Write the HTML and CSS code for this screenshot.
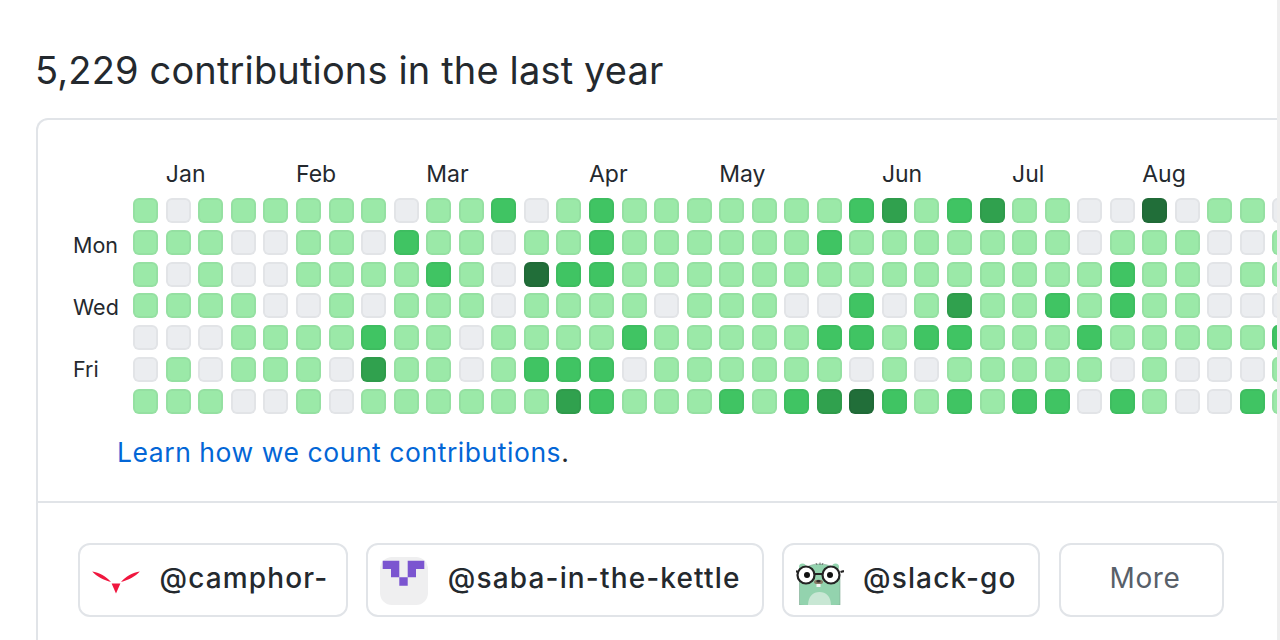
FILE: index.html
```html
<!DOCTYPE html>
<html lang="en">
<head>
<meta charset="utf-8">
<title>Contributions</title>
<link rel="stylesheet" href="styles.css">
</head>
<body>
<main class="page">
<h2 class="title">5,229 contributions in the last year</h2>
<section class="card">
<div class="graph">
<div class="months"><span class="m1">Jan</span><span class="m2">Feb</span><span class="m3">Mar</span><span class="m4">Apr</span><span class="m5">May</span><span class="m6">Jun</span><span class="m7">Jul</span><span class="m8">Aug</span></div>
<div class="calendar">
<div class="weekdays"><span class="d1">Mon</span><span class="d3">Wed</span><span class="d5">Fri</span></div>
<div class="cells">
<i class="l1"></i><i class="l1"></i><i class="l1"></i><i class="l1"></i><i class="l0"></i><i class="l0"></i><i class="l1"></i>
<i class="l0"></i><i class="l1"></i><i class="l0"></i><i class="l1"></i><i class="l0"></i><i class="l1"></i><i class="l1"></i>
<i class="l1"></i><i class="l1"></i><i class="l1"></i><i class="l1"></i><i class="l0"></i><i class="l0"></i><i class="l1"></i>
<i class="l1"></i><i class="l0"></i><i class="l0"></i><i class="l1"></i><i class="l1"></i><i class="l1"></i><i class="l0"></i>
<i class="l1"></i><i class="l0"></i><i class="l0"></i><i class="l0"></i><i class="l1"></i><i class="l1"></i><i class="l0"></i>
<i class="l1"></i><i class="l1"></i><i class="l1"></i><i class="l0"></i><i class="l1"></i><i class="l1"></i><i class="l1"></i>
<i class="l1"></i><i class="l1"></i><i class="l1"></i><i class="l1"></i><i class="l1"></i><i class="l0"></i><i class="l0"></i>
<i class="l1"></i><i class="l0"></i><i class="l1"></i><i class="l0"></i><i class="l2"></i><i class="l3"></i><i class="l1"></i>
<i class="l0"></i><i class="l2"></i><i class="l1"></i><i class="l1"></i><i class="l1"></i><i class="l1"></i><i class="l1"></i>
<i class="l1"></i><i class="l1"></i><i class="l2"></i><i class="l1"></i><i class="l1"></i><i class="l1"></i><i class="l1"></i>
<i class="l1"></i><i class="l1"></i><i class="l1"></i><i class="l1"></i><i class="l0"></i><i class="l0"></i><i class="l1"></i>
<i class="l2"></i><i class="l0"></i><i class="l0"></i><i class="l0"></i><i class="l1"></i><i class="l1"></i><i class="l1"></i>
<i class="l0"></i><i class="l1"></i><i class="l4"></i><i class="l1"></i><i class="l1"></i><i class="l2"></i><i class="l1"></i>
<i class="l1"></i><i class="l1"></i><i class="l2"></i><i class="l1"></i><i class="l1"></i><i class="l2"></i><i class="l3"></i>
<i class="l2"></i><i class="l2"></i><i class="l2"></i><i class="l1"></i><i class="l1"></i><i class="l2"></i><i class="l2"></i>
<i class="l1"></i><i class="l1"></i><i class="l1"></i><i class="l1"></i><i class="l2"></i><i class="l0"></i><i class="l1"></i>
<i class="l1"></i><i class="l1"></i><i class="l1"></i><i class="l0"></i><i class="l1"></i><i class="l1"></i><i class="l1"></i>
<i class="l1"></i><i class="l1"></i><i class="l1"></i><i class="l1"></i><i class="l1"></i><i class="l1"></i><i class="l1"></i>
<i class="l1"></i><i class="l1"></i><i class="l1"></i><i class="l1"></i><i class="l1"></i><i class="l1"></i><i class="l2"></i>
<i class="l1"></i><i class="l1"></i><i class="l1"></i><i class="l1"></i><i class="l1"></i><i class="l1"></i><i class="l1"></i>
<i class="l1"></i><i class="l1"></i><i class="l1"></i><i class="l0"></i><i class="l1"></i><i class="l1"></i><i class="l2"></i>
<i class="l1"></i><i class="l2"></i><i class="l1"></i><i class="l0"></i><i class="l2"></i><i class="l1"></i><i class="l3"></i>
<i class="l2"></i><i class="l1"></i><i class="l1"></i><i class="l2"></i><i class="l2"></i><i class="l0"></i><i class="l4"></i>
<i class="l3"></i><i class="l1"></i><i class="l1"></i><i class="l0"></i><i class="l1"></i><i class="l1"></i><i class="l2"></i>
<i class="l1"></i><i class="l1"></i><i class="l1"></i><i class="l1"></i><i class="l2"></i><i class="l0"></i><i class="l1"></i>
<i class="l2"></i><i class="l1"></i><i class="l1"></i><i class="l3"></i><i class="l2"></i><i class="l1"></i><i class="l2"></i>
<i class="l3"></i><i class="l1"></i><i class="l1"></i><i class="l1"></i><i class="l1"></i><i class="l1"></i><i class="l1"></i>
<i class="l1"></i><i class="l1"></i><i class="l1"></i><i class="l1"></i><i class="l1"></i><i class="l1"></i><i class="l2"></i>
<i class="l1"></i><i class="l1"></i><i class="l1"></i><i class="l2"></i><i class="l1"></i><i class="l1"></i><i class="l2"></i>
<i class="l0"></i><i class="l0"></i><i class="l1"></i><i class="l1"></i><i class="l2"></i><i class="l1"></i><i class="l0"></i>
<i class="l0"></i><i class="l1"></i><i class="l2"></i><i class="l2"></i><i class="l1"></i><i class="l0"></i><i class="l2"></i>
<i class="l4"></i><i class="l1"></i><i class="l1"></i><i class="l1"></i><i class="l1"></i><i class="l1"></i><i class="l1"></i>
<i class="l0"></i><i class="l1"></i><i class="l1"></i><i class="l1"></i><i class="l1"></i><i class="l0"></i><i class="l0"></i>
<i class="l1"></i><i class="l0"></i><i class="l0"></i><i class="l0"></i><i class="l1"></i><i class="l0"></i><i class="l0"></i>
<i class="l1"></i><i class="l0"></i><i class="l1"></i><i class="l0"></i><i class="l1"></i><i class="l0"></i><i class="l2"></i>
<i class="l0"></i><i class="l1"></i><i class="l1"></i><i class="l0"></i><i class="l2"></i><i class="l1"></i><i class="l1"></i>
</div>
</div>
<p class="learn"><a href="#">Learn how we count contributions</a>.</p>
</div>
<div class="orgs">
<a class="chip chip-short" href="#">
<svg class="avatar" viewBox="0 0 48 48" aria-hidden="true"><path fill="#f0163e" d="M.2 14.600C7 15.300 14.500 20 19 25c-7-1.500-14.500-5.400-18.800-10.400zM47.800 14.600C41 15.300 33.500 20 29 25c7-1.500 14.500-5.400 18.800-10.400zM19.600 26.400h8.800L24 36.500z"/></svg>
<span>@camphor-</span>
</a>
<a class="chip" href="#">
<svg class="avatar" viewBox="0 0 48 48" aria-hidden="true"><rect width="48" height="48" rx="12" fill="#efeff0"/><path fill="#7b55d0" d="M2.700 3.700h16.600v16.600h8.400V3.700h16.600V12H36v8.300h-8.300v8.400h-8.400v-8.400H11V12H2.700z"/></svg>
<span>@saba-in-the-kettle</span>
</a>
<a class="chip" href="#">
<svg class="avatar" viewBox="0 0 48 48" aria-hidden="true">
<circle cx="6.500" cy="10" r="3.500" fill="#93d3ae"/><circle cx="39.500" cy="10" r="3.500" fill="#93d3ae"/>
<path fill="#93d3ae" stroke="#7ea892" stroke-width=".6" d="M3.500 48V22C3.500 12 13 7 23.500 7S44 12 44 22v26c-8 1.300-32.500 1.300-40.500 0z"/>
<path fill="#c8e7d4" d="M12 48.500c0-9 5-13.500 11.500-13.500S35 39.500 35 48.500c-6 .8-17 .8-23 0z"/>
<path fill="none" stroke="#555" stroke-width=".8" d="M20 6l1 2M24 5.500V8M27 6l-1 2"/>
<path fill="none" stroke="#232323" stroke-width="2.200" d="M-1 14l3.500 1M48 14l-3.500 1M18 17h9"/>
<circle cx="10" cy="18" r="8.500" fill="#fff" stroke="#232323" stroke-width="2.200"/>
<circle cx="35" cy="18" r="8.500" fill="#fff" stroke="#232323" stroke-width="2.200"/>
<circle cx="11" cy="18" r="3" fill="#111"/><circle cx="34" cy="18" r="3" fill="#111"/>
<ellipse cx="22.500" cy="25" rx="4.500" ry="2.200" fill="#8a7a66"/><ellipse cx="22.500" cy="24.300" rx="2.200" ry="1.300" fill="#2b2b2b"/>
<rect x="20.500" y="27" width="4" height="3" fill="#f5f5f5"/>
</svg>
<span>@slack-go</span>
</a>
<a class="chip more" href="#"><span>More</span></a>
</div>
</section>
</main>
<div class="edge"></div>
</body>
</html>
```
FILE: styles.css
```css
* { box-sizing: border-box; }
html, body { margin: 0; height: 640px; overflow: hidden; background: #fff; }
body {
  display: flex;
  font-family: Inter, "Liberation Sans", sans-serif;
  color: #24292e;
}
.page { flex: 1; min-width: 0; overflow: hidden; padding: 46px 0 0 36px; }
.edge { width: 3px; background: #eeeeee; }
.title { margin: 0 0 24px -1px; font-size: 38px; line-height: 48px; font-weight: 400; letter-spacing: .15px; }
.card { margin-right: -30px; border: 2px solid #e1e4e8; border-bottom: 0; border-radius: 12px 12px 0 0; }
.graph { padding: 38px 0 34px 36px; border-bottom: 2px solid #e1e4e8; }
.months {
  display: grid;
  grid-template-columns: repeat(36, 25px);
  column-gap: 7.56px;
  height: 30px;
  margin: 0 0 10px 59.3px;
  font-size: 23px;
  line-height: 32px;
}
.months span { white-space: nowrap; }
.m1 { grid-column: 2; }
.m2 { grid-column: 6; }
.m3 { grid-column: 10; }
.m4 { grid-column: 15; }
.m5 { grid-column: 19; }
.m6 { grid-column: 24; }
.m7 { grid-column: 28; }
.m8 { grid-column: 32; }
.calendar { display: flex; }
.weekdays {
  flex: 0 0 59.3px;
  display: grid;
  grid-template-rows: repeat(7, 25px);
  row-gap: 6px;
  margin: .8px 1px 0 -1px;
  font-size: 21.500px;
  line-height: 30px;
}
.weekdays span { white-space: nowrap; }
.d1 { grid-row: 2; }
.d3 { grid-row: 4; }
.d5 { grid-row: 6; }
.cells {
  display: grid;
  grid-auto-flow: column;
  grid-template-rows: repeat(7, 25px);
  grid-auto-columns: 25px;
  gap: 6.8px 7.56px;
}
.cells i { display: block; border-radius: 6px; box-shadow: inset 0 0 0 2px rgba(27, 31, 35, .04); }
.l0 { background: #ebedf0; }
.l1 { background: #9be9a8; }
.l2 { background: #40c463; }
.l3 { background: #30a14e; }
.l4 { background: #216e39; }
.learn { margin: 23px 0 0 43px; font-size: 26.500px; line-height: 30px; letter-spacing: .55px; }
.learn a { color: #0366d6; text-decoration: none; }
.orgs { display: flex; padding: 40px 0 40px 40px; }
.chip {
  display: flex;
  align-items: center;
  gap: 19.500px;
  height: 74px;
  margin-right: 18px;
  padding: 0 21px 0 12px;
  border: 2px solid #e1e4e8;
  border-radius: 12px;
  color: #24292e;
  font-size: 28px;
  font-weight: 500;
  letter-spacing: 1.150px;
  text-decoration: none;
  white-space: nowrap;
}
.chip-short { padding-right: 18px; }
.chip span { margin-bottom: 4px; }
.avatar { flex: 0 0 48px; width: 48px; height: 48px; margin-top: 2px; }
.more { margin-left: 1px; padding: 0 42px 0 49px; color: #586069; font-weight: 400; letter-spacing: .6px; }
```
